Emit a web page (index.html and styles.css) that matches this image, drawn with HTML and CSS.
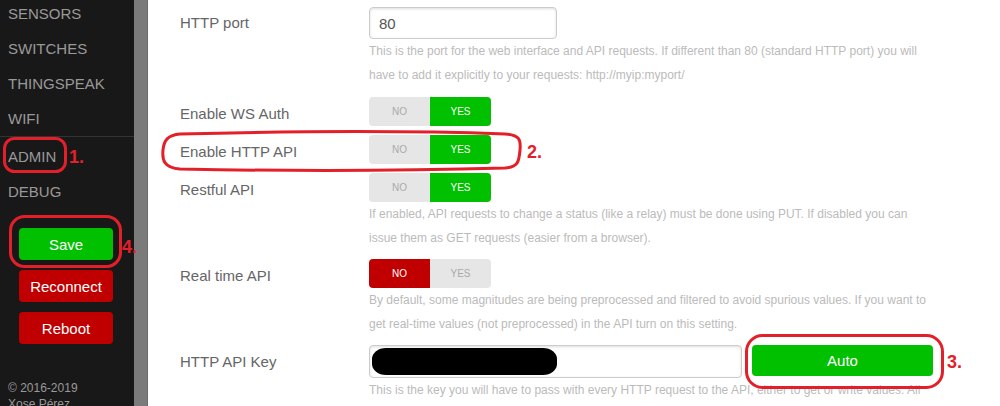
FILE: index.html
```html
<!DOCTYPE html>
<html lang="en">
<head>
    <meta charset="UTF-8">
    <meta name="viewport" content="width=device-width, initial-scale=1.0">
    <title>ESPurna - Admin</title>
    <link rel="stylesheet" href="styles.css">
</head>
<body>
    <div class="layout">
        <div class="sidebar">
            <ul class="menu">
                <li>Sensors</li>
                <li>Switches</li>
                <li>Thingspeak</li>
                <li>Wifi</li>
            </ul>
            <ul class="menu menu-separated">
                <li>Admin</li>
                <li>Debug</li>
            </ul>
            <div class="actions">
                <button class="btn btn-green">Save</button>
                <button class="btn btn-red">Reconnect</button>
                <button class="btn btn-red">Reboot</button>
            </div>
            <div class="copyright">
                © 2016-2019<br>
                Xose Pérez
            </div>
        </div>
        <div class="scrollbar"></div>

        <div class="main">
            <div class="row">
                <label class="row-label">HTTP port</label>
                <div class="row-control">
                    <input class="field field-port" type="text" value="80">
                    <p class="hint hint-port">This is the port for the web interface and API requests. If different than 80 (standard HTTP port) you will have to add it explicitly to your requests: http://myip:myport/</p>
                </div>
            </div>

            <div class="row">
                <label class="row-label label-toggle">Enable WS Auth</label>
                <div class="row-control">
                    <div class="toggle"><span>NO</span><span class="yes">YES</span></div>
                </div>
            </div>

            <div class="row">
                <label class="row-label label-toggle">Enable HTTP API</label>
                <div class="row-control">
                    <div class="toggle"><span>NO</span><span class="yes">YES</span></div>
                </div>
            </div>

            <div class="row">
                <label class="row-label label-toggle">Restful API</label>
                <div class="row-control">
                    <div class="toggle"><span>NO</span><span class="yes">YES</span></div>
                    <p class="hint">If enabled, API requests to change a status (like a relay) must be done using PUT. If disabled you can issue them as GET requests (easier from a browser).</p>
                </div>
            </div>

            <div class="row">
                <label class="row-label label-toggle">Real time API</label>
                <div class="row-control">
                    <div class="toggle"><span class="no">NO</span><span>YES</span></div>
                    <p class="hint">By default, some magnitudes are being preprocessed and filtered to avoid spurious values. If you want to get real-time values (not preprocessed) in the API turn on this setting.</p>
                </div>
            </div>

            <div class="row">
                <label class="row-label label-key">HTTP API Key</label>
                <div class="row-control">
                    <div class="key-line">
                        <div class="field field-key"><span class="redacted"></span></div>
                        <button class="btn btn-green btn-auto">Auto</button>
                    </div>
                    <p class="hint">This is the key you will have to pass with every HTTP request to the API, either to get or write values. All</p>
                </div>
            </div>
        </div>

        <!-- step markers drawn on top of the page -->
        <svg class="marks" width="1000" height="406" viewBox="0 0 1000 406">
            <rect x="4.5" y="138.5" width="61" height="33" rx="10"/>
            <rect x="10.5" y="216.5" width="110" height="50" rx="14"/>
            <path d="M 180 134 C 300 131, 420 131, 505 134 C 520 135, 521 140, 520 150 C 519 162, 518 167, 505 168 C 400 171, 280 171, 180 169 C 164 168, 162 160, 163 150 C 164 140, 168 135, 180 134 Z"/>
            <rect x="746.5" y="335.5" width="196" height="52" rx="16"/>
            <text x="69" y="163">1.</text>
            <text x="527" y="158">2.</text>
            <text x="947" y="368">3.</text>
            <text x="122" y="253">4.</text>
        </svg>
    </div>
</body>
</html>
```

FILE: styles.css
```css
* {
    padding: 0;
    margin: 0;
    box-sizing: border-box;
    font-family: "Liberation Sans", Arial, sans-serif;
}
body {
    width: 100%;
    height: 100vh;
    background: #fff;
    overflow: hidden;
}
.layout {
    position: relative;
    display: flex;
    height: 406px;
    overflow: hidden;
}

/* side menu */
.sidebar {
    width: 134px;
    flex-shrink: 0;
    background: #191818;
    display: flex;
    flex-direction: column;
}
.menu {
    list-style: none;
    margin-top: -4px;
}
.menu li {
    padding: 0 8px;
    line-height: 35px;
    font-size: 15px;
    color: #999;
    text-transform: uppercase;
}
.menu-separated {
    margin-top: 0;
    padding-top: 2px;
    border-top: 1px solid #333;
}
.actions {
    display: flex;
    flex-direction: column;
    gap: 10px;
    padding: 19px 0 0 19px;
}
.btn {
    border: none;
    border-radius: 4px;
    color: #fff;
    font-size: 15px;
    cursor: pointer;
}
.actions .btn {
    width: 94px;
    height: 32px;
}
.btn-green {
    background: #00c000;
}
.btn-red {
    background: #c00000;
}
.copyright {
    margin-top: 36px;
    padding-left: 8px;
    font-size: 12px;
    line-height: 16px;
    color: #999;
}
.scrollbar {
    width: 14px;
    flex-shrink: 0;
    background: #7b7b7b;
    border-right: 1px solid #6a6a6a;
}

/* settings form */
.main {
    flex: 1;
    padding: 7px 0 0 32px;
}
.row {
    display: flex;
    margin-bottom: 9px;
}
.row-label {
    width: 189px;
    flex-shrink: 0;
    font-size: 15px;
    line-height: 32px;
    color: #666;
}
.label-toggle {
    line-height: 25px;
    padding-top: 4px;
}
.label-key {
    line-height: 33px;
}
.row-control {
    width: 564px;
}
.field {
    height: 32px;
    border: 1px solid #ccc;
    border-radius: 4px;
    box-shadow: inset 0 1px 3px #ddd;
    background: #fff;
}
.field-port {
    display: block;
    width: 188px;
    padding: 0 9px;
    font-size: 15px;
    color: #555;
}
.hint {
    font-size: 12px;
    line-height: 24px;
    color: #bbb;
}
.hint-port {
    padding-bottom: 1px;
}
.toggle {
    display: flex;
    width: 122px;
    height: 29px;
    border-radius: 4px;
    overflow: hidden;
}
.toggle span {
    flex: 1;
    display: flex;
    align-items: center;
    justify-content: center;
    font-size: 10px;
    background: #e6e6e6;
    color: #aaa;
}
.toggle .yes {
    background: #00c000;
    color: #fff;
}
.toggle .no {
    background: #c00000;
    color: #fff;
}
.key-line {
    display: flex;
    gap: 10px;
    align-items: flex-start;
}
.field-key {
    width: 373px;
    height: 33px;
    padding: 2px;
}
.redacted {
    display: block;
    width: 185px;
    height: 27px;
    background: #000;
    border-radius: 14px / 11px;
}
.btn-auto {
    width: 181px;
    height: 31px;
}

/* red step markers */
.marks {
    position: absolute;
    left: 0;
    top: 0;
    pointer-events: none;
}
.marks rect,
.marks path {
    fill: none;
    stroke: #e3202a;
    stroke-width: 3;
}
.marks text {
    fill: #e3202a;
    font-size: 18px;
    font-weight: bold;
}
```
